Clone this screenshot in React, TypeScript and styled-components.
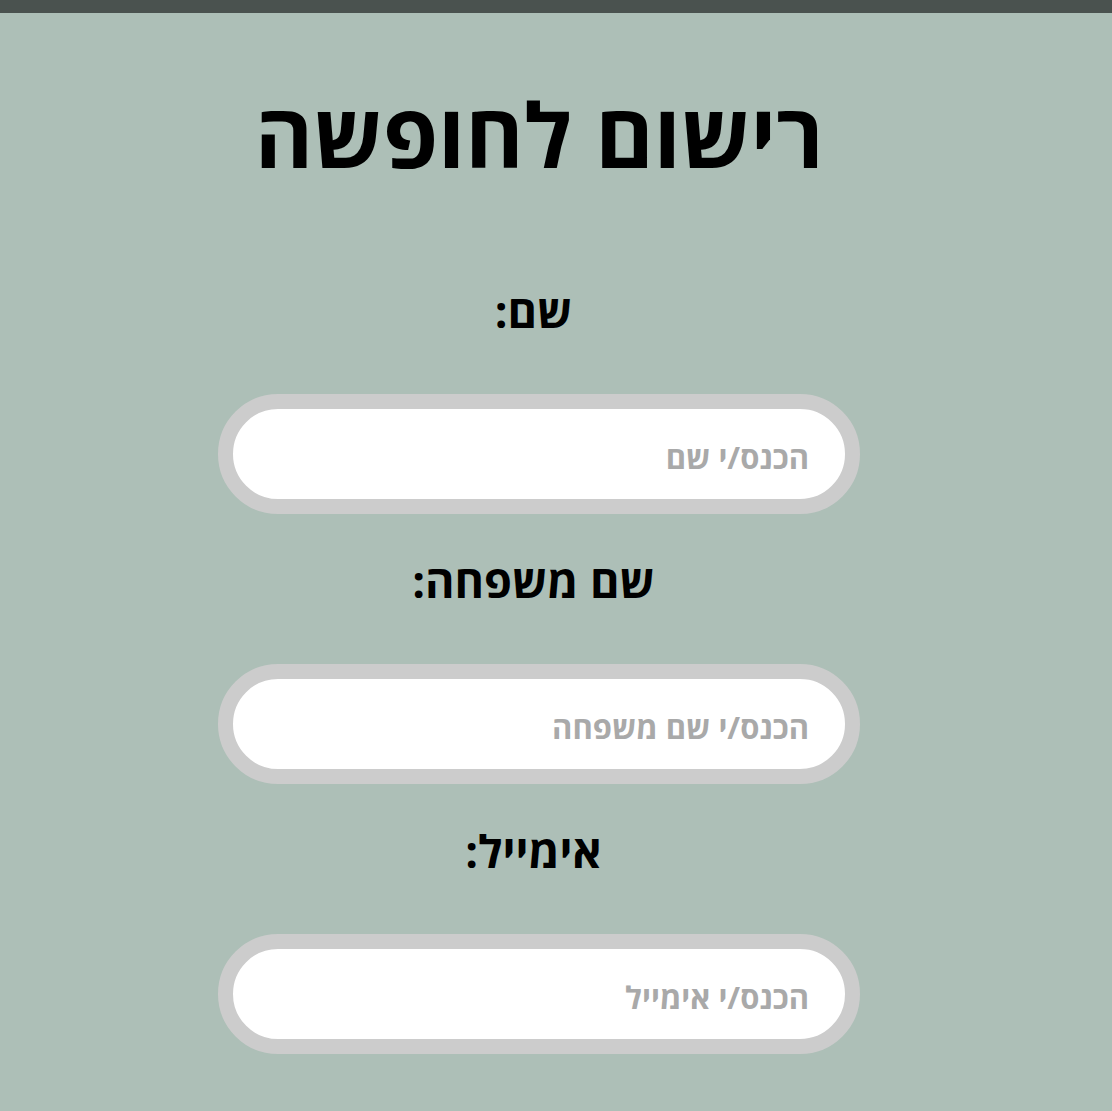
import styled, { createGlobalStyle } from "styled-components";

const GlobalStyle = createGlobalStyle`
  html, body {
    margin: 0;
    padding: 0;
    background: #adbfb7;
    font-family: "Open Sans", "DejaVu Sans", sans-serif;
  }
`;

const TopBar = styled.div`
  height: 13px;
  background: #4a524f;
`;

const Page = styled.div`
  direction: rtl;
  display: flex;
  flex-direction: column;
  align-items: center;
  padding-right: 34px;
  padding-bottom: 40px;
`;

const Title = styled.h1`
  margin: 76px 0 0;
  font-size: 89px;
  font-weight: bold;
  line-height: 1;
  color: #000;
`;

const Form = styled.form`
  display: flex;
  flex-direction: column;
  align-items: center;
  margin-top: 110px;
`;

const Label = styled.label`
  font-size: 45px;
  font-weight: bold;
  line-height: 1;
  color: #000;
  margin: 0 11px 61px 0;
`;

const Input = styled.input`
  box-sizing: border-box;
  width: 642px;
  height: 120px;
  border: 15px solid #cccccc;
  border-radius: 60px;
  background: #fff;
  padding: 6px 36px 0;
  direction: rtl;
  text-align: right;
  font-family: "Open Sans", "DejaVu Sans", sans-serif;
  font-size: 31px;
  font-weight: bold;
  outline: none;
  margin-bottom: 44px;

  &::placeholder {
    color: #a9a9a9;
  }
`;

const fields = [
  { id: "first", label: "שם:", placeholder: "הכנס/י שם" },
  { id: "last", label: "שם משפחה:", placeholder: "הכנס/י שם משפחה" },
  { id: "email", label: "אימייל:", placeholder: "הכנס/י אימייל" },
];

function App() {
  return (
    <>
      <GlobalStyle />
      <TopBar />
      <Page>
        <Title>רישום לחופשה</Title>
        <Form>
          {fields.map((f) => (
            <>
              <Label key={f.id + "-l"} htmlFor={f.id}>
                {f.label}
              </Label>
              <Input key={f.id} id={f.id} placeholder={f.placeholder} />
            </>
          ))}
        </Form>
      </Page>
    </>
  );
}

export default App;
